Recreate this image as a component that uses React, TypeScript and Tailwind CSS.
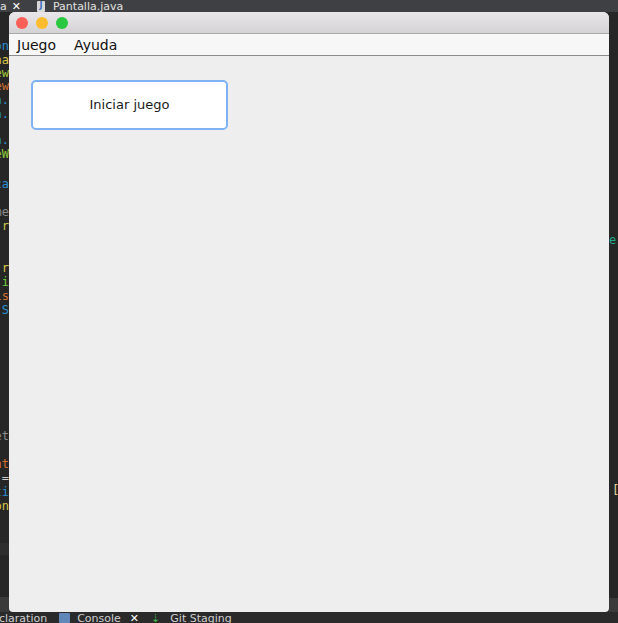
import React from "react";

const leftCode = [
  { top: 40, text: "on", color: "text-[#2a8fd0]" },
  { top: 54, text: "na", color: "text-[#d6c64a]" },
  { top: 67, text: "ew", color: "text-[#a6c93a]" },
  { top: 80, text: "ew", color: "text-[#d2702e]" },
  { top: 94, text: "a.", color: "text-[#2a8fd0]" },
  { top: 108, text: "a.", color: "text-[#2a8fd0]" },
  { top: 134, text: "a.", color: "text-[#2a8fd0]" },
  { top: 148, text: "eW", color: "text-[#8fc93a]" },
  { top: 178, text: "ca", color: "text-[#2a8fd0]" },
  { top: 206, text: "me", color: "text-[#8a8a8a]" },
  { top: 220, text: " r", color: "text-[#c8c84a]" },
  { top: 262, text: "r", color: "text-[#d6c64a]" },
  { top: 276, text: " i", color: "text-[#6fc93a]" },
  { top: 290, text: "ls", color: "text-[#d2702e]" },
  { top: 304, text: " S", color: "text-[#2a8fd0]" },
  { top: 430, text: "et", color: "text-[#8a8a8a]" },
  { top: 458, text: "nt", color: "text-[#d2702e]" },
  { top: 472, text: "=", color: "text-[#cfcfcf]" },
  { top: 486, text: "ti", color: "text-[#2a8fd0]" },
  { top: 500, text: "on", color: "text-[#d6c64a]" },
];

function TrafficLight({ color }: { color: string }) {
  return <span className={`w-[12px] h-[12px] rounded-full ${color}`} />;
}

export default function App() {
  return (
    <div className="w-[618px] h-[623px] bg-[#262626] flex flex-col overflow-hidden font-['Lucida_Grande','DejaVu_Sans','Noto_Sans',sans-serif]">
      {/* editor tab strip */}
      <div className="h-[12px] bg-[#3f4043] flex items-center text-[11px] leading-none text-[#e0e0e0]">
        <span>a</span>
        <span className="ml-[5px] text-white font-bold text-[11px]">✕</span>
        <span className="ml-[16px] w-[8px] h-[11px] bg-[#d9d9d9] rounded-[1px] text-[#3a6ec4] text-[8px] font-bold flex items-center justify-center">J</span>
        <span className="ml-[8px]">Pantalla.java</span>
      </div>

      <div className="flex h-[600px]">
        {/* left code gutter */}
        <div className="w-[9px] relative overflow-hidden font-['DejaVu_Sans_Mono',monospace] text-[12px] leading-none">
          {leftCode.map((c, i) => (
            <span
              key={i}
              className={`absolute right-0 whitespace-nowrap ${c.color}`}
              style={{ top: c.top - 12 }}
            >
              {c.text}
            </span>
          ))}
          <div className="absolute left-0 right-0 top-[531px] h-[12px] bg-[#2e2e2e]" />
          <div className="absolute left-0 right-0 top-[585px] h-[15px] bg-[#3a3a3a]" />
        </div>

        {/* java window */}
        <div className="w-[600px] h-[600px] rounded-t-[6px] rounded-b-[4px] overflow-hidden flex flex-col bg-[#eeeeee]">
          <div className="h-[22px] bg-gradient-to-b from-[#e9e7e9] to-[#d4d2d4] border-b border-[#a9a9a9] flex items-center gap-[8px] pl-[7px]">
            <TrafficLight color="bg-[#fc5f57]" />
            <TrafficLight color="bg-[#fdbc2e]" />
            <TrafficLight color="bg-[#28c840]" />
          </div>
          <div className="h-[22px] bg-[#f7f7f7] border-b border-[#8c8c8c] flex items-center gap-[18px] pl-[8px] text-[14px] text-[#111111] leading-none">
            <span>Juego</span>
            <span>Ayuda</span>
          </div>
          <div className="flex-1 pt-[24px] pl-[22px]">
            <button className="w-[197px] h-[50px] bg-white rounded-[5px] border-[2px] border-[#80b3f3] text-[13px] text-[#1a1a1a]">
              Iniciar juego
            </button>
          </div>
        </div>

        {/* right code gutter */}
        <div className="w-[9px] relative overflow-hidden font-['DejaVu_Sans_Mono',monospace] text-[12px] leading-none">
          <span className="absolute left-[0px] top-[222px] text-[#1fa88a]">e</span>
          <span className="absolute left-[3px] top-[472px] text-[#e8d8a0]">[</span>
          <div className="absolute left-0 right-0 top-[586px] h-[14px] bg-[#3a3a3a]" />
        </div>
      </div>

      {/* bottom view tabs */}
      <div className="h-[11px] bg-[#2a2a2b] flex items-start text-[11px] leading-none text-[#cfcfcf] overflow-hidden">
        <span className="-ml-[1px] mt-[1px]">claration</span>
        <span className="ml-[12px] mt-[1px] w-[11px] h-[10px] bg-[#5f87b8] rounded-[1px]" />
        <span className="ml-[7px] mt-[1px]">Console</span>
        <span className="ml-[9px] mt-[1px] text-white font-bold">✕</span>
        <span className="ml-[12px] mt-[1px] text-[#3bb34a] text-[11px]">⇣</span>
        <span className="ml-[10px] mt-[1px]">Git Staging</span>
      </div>
    </div>
  );
}
